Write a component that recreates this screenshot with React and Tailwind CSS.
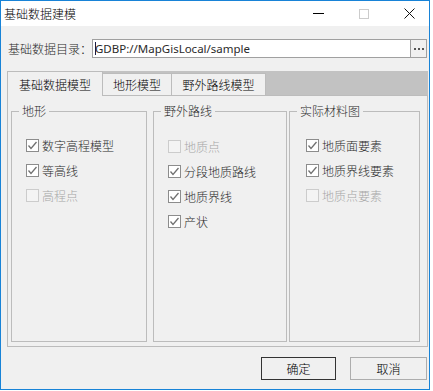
import React from 'react';

const groups = [
  {
    title: '地形',
    w: 'w-[136px]',
    ml: 'ml-[3px]',
    pt: 'pt-[14px]',
    pl: 'pl-[14px]',
    items: [
      { label: '数字高程模型', checked: true },
      { label: '等高线', checked: true },
      { label: '高程点', disabled: true },
    ],
  },
  {
    title: '野外路线',
    w: 'w-[134px]',
    ml: 'ml-[6px]',
    pt: 'pt-[15px]',
    pl: 'pl-[14px]',
    items: [
      { label: '地质点', disabled: true },
      { label: '分段地质路线', checked: true },
      { label: '地质界线', checked: true },
      { label: '产状', checked: true },
    ],
  },
  {
    title: '实际材料图',
    w: 'w-[131px]',
    ml: 'ml-[2px]',
    pt: 'pt-[14px]',
    pl: 'pl-[16px]',
    items: [
      { label: '地质面要素', checked: true },
      { label: '地质界线要素', checked: true },
      { label: '地质点要素', disabled: true },
    ],
  },
];

function CheckRow({ label, checked, disabled }) {
  return (
    <div className="flex h-[25px] items-center gap-[3px]">
      <span
        className={
          disabled
            ? 'flex h-[13px] w-[13px] items-center justify-center border border-[#cccccc] bg-[#f4f4f4]'
            : 'flex h-[13px] w-[13px] items-center justify-center border border-[#8c8c8c] bg-white'
        }
      >
        {checked && (
          <svg width="11" height="11" viewBox="0 0 11 11">
            <path d="M1.5 5.5 L4 8.5 L9.5 2" fill="none" stroke="#707070" strokeWidth="1.3" />
          </svg>
        )}
      </span>
      <span className={disabled ? 'text-[#a6a6a6]' : 'text-[#2a2a2a]'}>{label}</span>
    </div>
  );
}

export default function App() {
  return (
    <div className="h-[391px] w-[433px] overflow-hidden bg-white font-['Microsoft_YaHei','Noto_Sans_CJK_SC',sans-serif] text-[12px] font-light leading-[16px] text-[#2a2a2a]">
      <div className="flex h-[390px] w-[430px] flex-col border border-[#1883d7] bg-[#f0f0f0]">
        {/* title bar */}
        <div className="flex h-[25px] items-center bg-white pl-[3px] pr-[1px]">
          <span className="text-black">基础数据建模</span>
          <div className="ml-auto flex h-full">
            <div className="flex w-[45px] items-center justify-center">
              <span className="h-[1px] w-[11px] bg-black" />
            </div>
            <div className="flex w-[45px] items-center justify-center">
              <span className="h-[10px] w-[10px] border border-[#cccccc]" />
            </div>
            <div className="flex w-[42px] items-center pl-[18px]">
              <svg width="11" height="11" viewBox="0 0 11 11">
                <path d="M0.5 0.5 L10.5 10.5 M10.5 0.5 L0.5 10.5" stroke="#111" strokeWidth="1" />
              </svg>
            </div>
          </div>
        </div>

        {/* directory row */}
        <div className="mt-[13px] flex h-[19px] items-center pl-[7px]">
          <span className="w-[84px]">基础数据目录：</span>
          <div className="flex h-[19px] w-[335px] border border-[#a0a0a0] bg-white">
            <div className="flex flex-1 items-center pl-[2px] font-['Noto_Sans','Noto_Sans_CJK_SC',sans-serif] text-[11.5px] font-normal">
              <span className="mr-[-1px] h-[13px] w-[1px] bg-[#1a1a40]" />
              <span>GDBP://MapGisLocal/sample</span>
            </div>
            <div className="flex w-[16px] items-center justify-center gap-[2px] border-l border-[#a0a0a0] bg-[#f0f0f0]">
              <span className="h-[2px] w-[2px] bg-[#555]" />
              <span className="h-[2px] w-[2px] bg-[#555]" />
              <span className="h-[2px] w-[2px] bg-[#555]" />
            </div>
          </div>
        </div>

        {/* tabs */}
        <div className="ml-[6px] mt-[13px] w-[421px]">
          <div className="flex h-[24px] items-end bg-[#c2c2c2]">
            <div className="relative z-10 mb-[-1px] flex h-[25px] w-[96px] items-center justify-center border-x border-t border-[#bcbcbc] bg-[#f0f0f0] pt-[2px] text-black">
              基础数据模型
            </div>
            <div className="flex h-[22px] w-[69px] items-center justify-center border-r border-t border-[#bcbcbc] bg-[#f0f0f0] pt-[1px] text-black">
              地形模型
            </div>
            <div className="flex h-[22px] w-[94px] items-center justify-center border-r border-t border-[#bcbcbc] bg-[#f0f0f0] pt-[1px] text-black">
              野外路线模型
            </div>
          </div>
          <div className="flex h-[252px] items-stretch border border-[#bcbcbc] pb-[4px] pt-[7px]">
            {groups.map((g) => (
              <fieldset key={g.title} className={`${g.w} ${g.ml} border border-[#bcbcbc]`}>
                <legend className="ml-[7px] px-[3px] leading-[16px]">{g.title}</legend>
                <div className={`${g.pt} ${g.pl}`}>
                  {g.items.map((it) => (
                    <CheckRow key={it.label} {...it} />
                  ))}
                </div>
              </fieldset>
            ))}
          </div>
        </div>

        {/* buttons */}
        <div className="mt-[10px] flex justify-end gap-[14px] pr-[2px]">
          <div className="flex h-[23px] w-[75px] items-center justify-center border border-[#333333] text-black">
            确定
          </div>
          <div className="flex h-[23px] w-[77px] items-center justify-center border border-[#adadad] text-black">
            取消
          </div>
        </div>
      </div>
    </div>
  );
}
